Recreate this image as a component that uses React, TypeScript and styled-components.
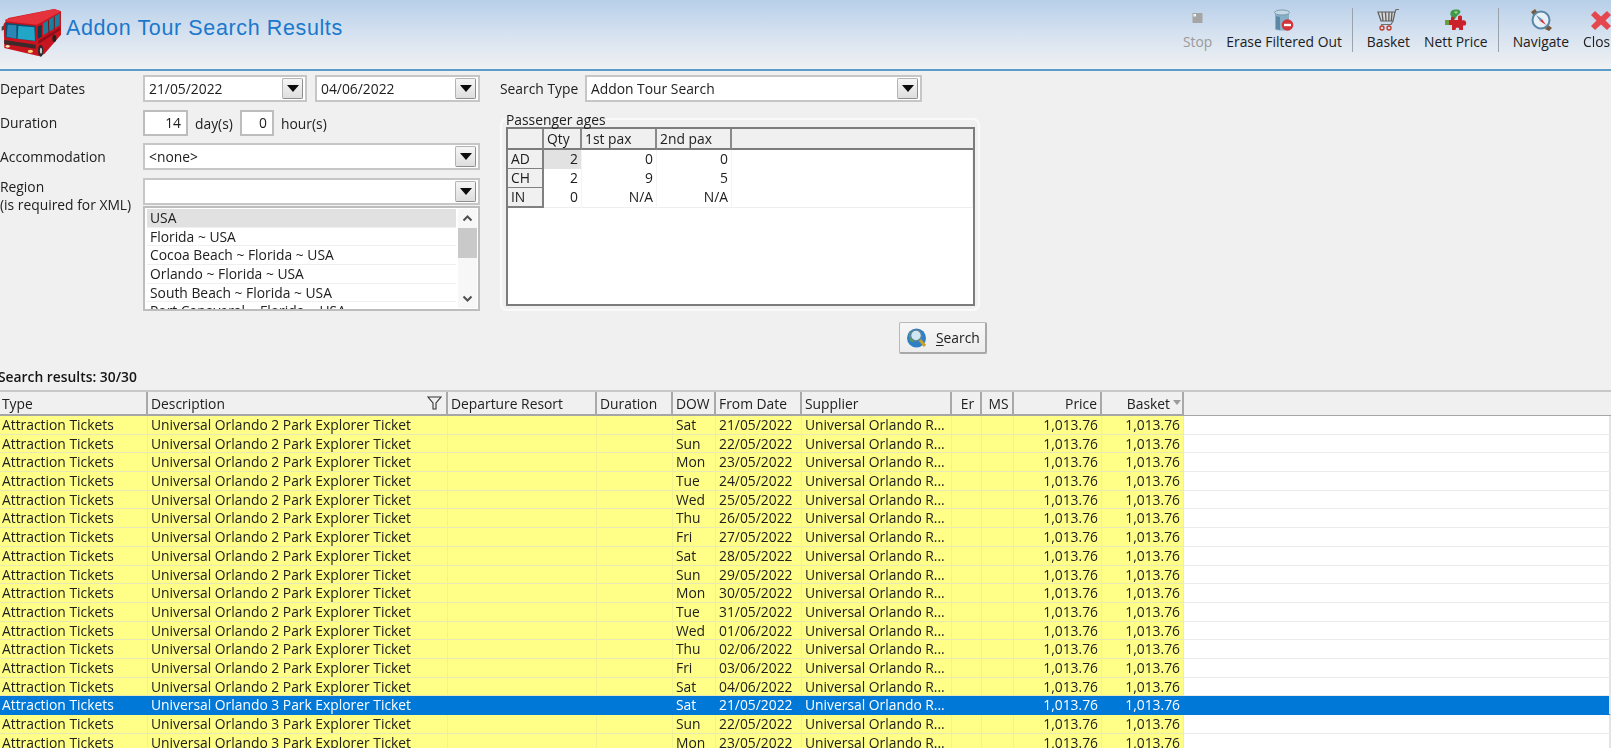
import React from "react";
import styled, { createGlobalStyle } from "styled-components";

const Global = createGlobalStyle`
  html, body { margin: 0; padding: 0; height: 100%; overflow: hidden; background: #f0f0f0; }
  body { font-family: "Open Sans", "Noto Sans", sans-serif; font-size: 13.85px; color: #202020; }
  #root { width: 1611px; height: 748px; overflow: hidden; }
`;

const Page = styled.div`
  width: 1611px;
  height: 748px;
  overflow: hidden;
  display: flex;
  flex-direction: column;
  filter: blur(0.3px);
`;

const Header = styled.header`
  height: 69px;
  flex: none;
  display: flex;
  align-items: flex-start;
  justify-content: space-between;
  background: linear-gradient(#b7cfe9 0%, #d6e2f0 50%, #f0f1f3 100%);
  border-bottom: 2px solid #5b9dc9;
`;

const Brand = styled.div`
  display: flex;
  align-items: center;
  padding: 4px 0 0 1px;
  gap: 5px;
`;

const Title = styled.h1`
  margin: 0 0 7px;
  font: 400 21.5px "Liberation Sans", Arial, sans-serif;
  letter-spacing: 0.62px;
  color: #1b78cc;
`;

const Toolbar = styled.div`
  display: flex;
  align-items: flex-start;
  flex: none;
  margin-right: -14px;
  padding-top: 8px;
`;

const Tool = styled.div<{ $disabled?: boolean }>`
  display: flex;
  flex-direction: column;
  align-items: center;
  padding: 0 7px;
  height: 44px;
  color: ${(p) => (p.$disabled ? "#9a9a9a" : "#202020")};
  white-space: nowrap;
`;

const ToolIcon = styled.svg`
  width: 24px;
  height: 24px;
  flex: none;
`;

const ToolSep = styled.div`
  width: 1px;
  height: 44px;
  margin: 0 7px 0 3px;
  background: #9aa3ab;
`;

const Form = styled.section`
  box-sizing: border-box;
  height: 297px;
  flex: none;
  display: flex;
  gap: 20px;
  padding-top: 4px;
`;

const LeftCol = styled.div`
  width: 480px;
  display: flex;
  flex-direction: column;
`;

const FieldRow = styled.div<{ $mb: number }>`
  display: flex;
  align-items: center;
  margin-bottom: ${(p) => p.$mb}px;
`;

const Label = styled.div`
  width: 143px;
  flex: none;
  line-height: 18px;
`;

const RegionLabel = styled(Label)`
  align-self: flex-start;
`;

const Combo = styled.div<{ $w?: number }>`
  box-sizing: border-box;
  height: 27px;
  width: ${(p) => (p.$w ? `${p.$w}px` : "auto")};
  flex: ${(p) => (p.$w ? "none" : "1")};
  background: #fff;
  border: 2px solid #c6c6c6;
  display: flex;
  align-items: center;
  padding: 0 2px 0 4px;
  justify-content: space-between;
`;

const RegionCombo = styled(Combo)`
  flex: none;
`;

const DateGap = styled.div`
  width: 8px;
  flex: none;
`;

const ArrowBtn = styled.div`
  box-sizing: border-box;
  width: 21px;
  height: 21px;
  border: 1px solid #b4b4b4;
  border-right-color: #8e8e8e;
  border-bottom-color: #8e8e8e;
  border-radius: 2px;
  background: linear-gradient(#f6f6f6, #dedede);
  display: flex;
  align-items: center;
  justify-content: center;
  &::before {
    content: "";
    border-left: 6px solid transparent;
    border-right: 6px solid transparent;
    border-top: 7px solid #0c0c0c;
  }
`;

const Spin = styled.div<{ $w: number }>`
  box-sizing: border-box;
  width: ${(p) => p.$w}px;
  height: 26px;
  background: #fff;
  border: 2px solid #bdbdbd;
  text-align: right;
  padding-right: 5px;
  line-height: 22px;
`;

const Unit = styled.span<{ $w: number }>`
  width: ${(p) => p.$w}px;
  padding-left: 7px;
  box-sizing: border-box;
`;

const RegionBlock = styled.div`
  flex: 1;
  display: flex;
  flex-direction: column;
`;

const ListBox = styled.div`
  box-sizing: border-box;
  height: 105px;
  margin-top: 1px;
  background: #fff;
  border: 2px solid #bdbdbd;
  display: flex;
  overflow: hidden;
`;

const ListItems = styled.div`
  flex: 1;
  padding: 1px 0 0 2px;
  overflow: hidden;
`;

const ListItem = styled.div<{ $sel?: boolean }>`
  box-sizing: border-box;
  height: 18.7px;
  line-height: 18px;
  padding-left: 3px;
  white-space: nowrap;
  background: ${(p) => (p.$sel ? "#e1e1e1" : "#fff")};
  border-bottom: 1px solid #efefef;
`;

const Scrollbar = styled.div`
  width: 19px;
  margin: 1px 1px 1px 2px;
  flex: none;
  display: flex;
  flex-direction: column;
  align-items: center;
  background: #f7f7f7;
`;

const Chevron = styled.svg`
  width: 19px;
  height: 19px;
  flex: none;
`;

const Thumb = styled.div`
  width: 19px;
  height: 30px;
  background: #c9c9c9;
`;

const ScrollGap = styled.div`
  flex: 1;
`;

const RightCol = styled.div`
  width: 487px;
  display: flex;
  flex-direction: column;
`;

const TypeRow = styled.div`
  display: flex;
  align-items: center;
  height: 27px;
`;

const TypeLabel = styled.div`
  width: 85px;
  flex: none;
  white-space: nowrap;
`;

const PaxGroup = styled.fieldset`
  box-sizing: border-box;
  width: 480px;
  height: 199px;
  margin: 10px 0 0;
  padding: 0 3px 5px 4px;
  border: 2px solid #fafafa;
  border-radius: 7px;
  min-width: 0;
`;

const PaxLegend = styled.legend`
  padding: 0;
  margin-left: 0;
  line-height: 14px;
  height: 14px;
  position: relative;
  top: 1px;
`;

const PaxGrid = styled.div`
  box-sizing: border-box;
  height: 179px;
  margin-top: 1px;
  background: #fff;
  border: 2px solid #7c7c7c;
  overflow: hidden;
`;

const PaxRow = styled.div<{ $head?: boolean }>`
  display: grid;
  grid-template-columns: 36px 38px 75px 75px 1fr;
  height: ${(p) => (p.$head ? "21px" : "19px")};
  line-height: ${(p) => (p.$head ? "19px" : "18px")};
`;

const PaxHead = styled.div`
  box-sizing: border-box;
  background: #f0f0f0;
  padding-left: 3px;
  border-right: 2px solid #8a8a8a;
  border-bottom: 2px solid #7c7c7c;
  &:last-child { border-right: none; }
`;

const PaxRowHead = styled.div`
  box-sizing: border-box;
  background: #f0f0f0;
  padding-left: 3px;
  border-right: 2px solid #808080;
  border-bottom: 2px solid #808080;
`;

const PaxCell = styled.div<{ $sel?: boolean }>`
  box-sizing: border-box;
  text-align: right;
  padding-right: 3px;
  background: ${(p) => (p.$sel ? "#e2e2e2" : "#fff")};
  border-bottom: 1px solid #eeeeee;
  border-right: 1px solid #f4f4f4;
`;

const SearchBar = styled.div`
  display: flex;
  justify-content: flex-end;
  margin-top: 11px;
`;

const SearchBtn = styled.button`
  box-sizing: border-box;
  width: 88px;
  height: 32px;
  padding: 0 0 0 6px;
  display: flex;
  align-items: center;
  gap: 8px;
  background: linear-gradient(#f7f7f7, #ececec);
  border: 1px solid #b9b9b9;
  border-right: 2px solid #a8a8a8;
  border-bottom: 2px solid #a8a8a8;
  border-radius: 2px;
  font: inherit;
  color: #202020;
  u { text-underline-offset: 2px; }
`;

const ResultsTitle = styled.div`
  flex: none;
  height: 22px;
  margin-left: -2px;
  font-weight: 600;
  line-height: 18px;
  color: #151515;
`;

const Results = styled.section`
  flex: 1;
  border-top: 2px solid #c8c8c8;
  overflow: hidden;
  background: #fff;
`;

const columns = "148px 300px 149px 76px 43px 86px 150px 30px 32px 88px 82px 1fr";

const HeadRow = styled.div`
  display: grid;
  grid-template-columns: ${columns};
  height: 24px;
  box-sizing: border-box;
  background: #f0f0f0;
  border-bottom: 2px solid #a6a6a6;
`;

const HeadCell = styled.div<{ $right?: number; $center?: boolean }>`
  box-sizing: border-box;
  position: relative;
  line-height: 23px;
  padding: 0 ${(p) => p.$right ?? 0}px 0 ${(p) => (p.$right ? 0 : 3)}px;
  text-align: ${(p) => (p.$right ? "right" : p.$center ? "center" : "left")};
  border-right: 2px solid #a9a9a9;
  white-space: nowrap;
  &:first-child { padding-left: 2px; }
`;

const HeadFill = styled.div`
  background: #f0f0f0;
`;

const FilterMark = styled.svg`
  position: absolute;
  right: 4px;
  top: 4px;
  width: 15px;
  height: 14px;
`;

const SortMark = styled.span`
  position: absolute;
  right: 1px;
  top: 8px;
  border-left: 4px solid transparent;
  border-right: 4px solid transparent;
  border-top: 5px solid #9a9a9a;
`;

const Row = styled.div`
  display: grid;
  grid-template-columns: ${columns};
  height: 18.7px;
`;

const Cell = styled.div<{ $sel: boolean; $right?: boolean }>`
  box-sizing: border-box;
  line-height: 18px;
  padding: ${(p) => (p.$right ? "0 3px 0 0" : "0 0 0 3px")};
  text-align: ${(p) => (p.$right ? "right" : "left")};
  white-space: nowrap;
  overflow: hidden;
  background: ${(p) => (p.$sel ? "#0078d7" : "#ffff88")};
  color: ${(p) => (p.$sel ? "#fff" : "#202020")};
  border-bottom: 1px solid ${(p) => (p.$sel ? "#0078d7" : "#e9e9b8")};
  border-right: 1px solid ${(p) => (p.$sel ? "#0078d7" : "#f2f28e")};
  &:first-child { padding-left: 2px; }
`;

const RowFill = styled.div<{ $sel: boolean }>`
  background: ${(p) => (p.$sel ? "#0078d7" : "#fff")};
  border-bottom: 1px solid ${(p) => (p.$sel ? "#0078d7" : "#ececec")};
  border-right: 2px solid #e4e4e4;
`;

const Bus = () => (
  <svg width="60" height="55" viewBox="0 0 180 165">
    <path d="M12 62 L2 68 L2 80 L12 76Z" fill="#444" />
    <path d="M8 60 L22 42 L160 15 L180 22 L180 92 L130 150 L112 156 L10 132Z" fill="#c8141f" />
    <path d="M14 46 L160 15 L180 22 L108 62 L12 52Z" fill="#e5323c" />
    <path d="M14 56 L104 66 L104 112 L14 100Z" fill="#0f4f6e" />
    <path d="M20 62 L46 64 L46 104 L17 98Z" fill="#2a86b4" />
    <path d="M52 66 L100 70 L102 110 L50 104Z" fill="#22a6c8" />
    <path d="M110 68 L122 62 L122 98 L110 104Z" fill="#10394a" />
    <path d="M126 58 L176 28 L176 64 L126 94Z" fill="#1a7f9c" />
    <path d="M142 48 L144 88M160 38 L160 76" stroke="#7e0f16" strokeWidth="3" />
    <path d="M10 108 L104 122 L104 134 L10 120Z" fill="#3a2a2c" />
    <path d="M112 110 L178 70 L178 78 L112 120Z" fill="#8f0e18" />
    <ellipse cx="20" cy="127" rx="6" ry="4" fill="#f6e9b0" />
    <ellipse cx="88" cy="142" rx="8" ry="5" fill="#f7d878" />
    <ellipse cx="119" cy="140" rx="8" ry="18" fill="#2a2a2a" />
    <ellipse cx="120" cy="140" rx="3.5" ry="9" fill="#c9c9c9" />
    <ellipse cx="160" cy="103" rx="6" ry="11" fill="#222" />
  </svg>
);

const StopIcon = () => (
  <ToolIcon viewBox="0 0 24 24">
    <rect x="6.5" y="5" width="10" height="10" fill="#a5a5a5" />
    <rect x="7.5" y="6" width="2.5" height="2.5" fill="#f4f4f4" />
  </ToolIcon>
);

const BinIcon = () => (
  <ToolIcon viewBox="0 0 24 24">
    <path d="M3 4 V21 C3 23 17 23 17 21 V4Z" fill="#86aec6" />
    <path d="M4 8 L4 21 L8 22 L8 9Z" fill="#5d88a5" />
    <ellipse cx="10" cy="4.5" rx="7.5" ry="2.5" fill="#c3d9e6" stroke="#7e9cb0" strokeWidth="1" />
    <circle cx="15.5" cy="17" r="5.8" fill="#d3333a" />
    <rect x="12" y="15.8" width="7" height="2.4" fill="#fff" />
  </ToolIcon>
);

const CartIcon = () => (
  <ToolIcon viewBox="0 0 24 24">
    <path d="M2 4 H19 L17 13 H5Z" fill="#d8d8d8" stroke="#5e5e5e" strokeWidth="1.2" />
    <path d="M6 4 L7 13M9.5 4 L10 13M13 4 L12.8 13M16 4 L15.3 13" stroke="#5e5e5e" strokeWidth="1.3" />
    <path d="M19 4 L20 1.5 H23M17 13 L15 16.5 H5" fill="none" stroke="#6e6e6e" strokeWidth="1.2" />
    <circle cx="6" cy="20" r="2" fill="none" stroke="#c0392b" strokeWidth="1.3" />
    <circle cx="13" cy="20" r="2" fill="none" stroke="#c0392b" strokeWidth="1.3" />
  </ToolIcon>
);

const PuzzleIcon = () => (
  <ToolIcon viewBox="0 0 24 24">
    <path d="M7 8 C5 4 8 1 12 1.5 C16 1 18 4 15 6 C13 8 12 9 11 11 C9 12 8 10 7 8Z" fill="#3f9a48" />
    <path d="M10 4 C11 3 13 3 14 4 L12 6Z" fill="#9ccf8e" />
    <path d="M1 12 H7 V9.5 C8 8 11 9 10.5 11 L10 12 H14 V8.5 C15 7 18 7 18 9 V12.5 C20 11.5 23 13 22 16 C22 18 20 17.5 19 17.5 V22 H15 C16 20 14 18.5 12 20 L11.5 22 H8 V17 H1Z" fill="#c9202a" />
    <path d="M1 12 H5 V17 H1Z" fill="#6d9c3f" />
  </ToolIcon>
);

const CompassIcon = () => (
  <ToolIcon viewBox="0 0 24 24">
    <path d="M2 4 L6 1 L9 5 L5 8Z" fill="#7a5a3c" />
    <path d="M19 17 L23 20 L20 23 L16 21Z" fill="#7a5a3c" />
    <circle cx="12" cy="12" r="8.5" fill="#e6f0f6" stroke="#5a87a6" strokeWidth="2" />
    <path d="M7 7 L13 11 L11 13Z" fill="#5f93b8" />
    <path d="M11 13 L13 11 L17 17Z" fill="#d7363d" />
  </ToolIcon>
);

const CloseIcon = () => (
  <ToolIcon viewBox="0 0 24 24">
    <path d="M6 3 L12 8.5 L18 3 L22 7 L16.5 12.5 L22 18 L18 22 L12 16.5 L6 22 L2 18 L7.5 12.5 L2 7Z" fill="#e4474d" />
  </ToolIcon>
);

const GlobeIcon = () => (
  <svg width="22" height="22" viewBox="0 0 22 22">
    <circle cx="10.5" cy="11" r="9.5" fill="#2f7fc6" />
    <path d="M3 6 C7 3 10 5 10 8 C7 9 6 12 8 15 C5 16 2 12 3 6Z" fill="#4fa34f" />
    <circle cx="10" cy="8.5" r="5.5" fill="#cfe7f2" stroke="#5f8096" strokeWidth="1.5" />
    <path d="M14 13 L19 19" stroke="#c9a126" strokeWidth="3" />
  </svg>
);

const Up = () => (
  <Chevron viewBox="0 0 19 19">
    <path d="M5.5 11.5 L9.5 7.5 L13.5 11.5" fill="none" stroke="#505050" strokeWidth="2" />
  </Chevron>
);

const Down = () => (
  <Chevron viewBox="0 0 19 19">
    <path d="M5.5 7.5 L9.5 11.5 L13.5 7.5" fill="none" stroke="#505050" strokeWidth="2" />
  </Chevron>
);

const regions = [
  "USA",
  "Florida ~ USA",
  "Cocoa Beach ~ Florida ~ USA",
  "Orlando ~ Florida ~ USA",
  "South Beach ~ Florida ~ USA",
  "Port Canaveral ~ Florida ~ USA",
];

const pax = [
  ["AD", "2", "0", "0"],
  ["CH", "2", "9", "5"],
  ["IN", "0", "N/A", "N/A"],
];

const dates: [string, string][] = [
  ["Sat", "21/05/2022"],
  ["Sun", "22/05/2022"],
  ["Mon", "23/05/2022"],
  ["Tue", "24/05/2022"],
  ["Wed", "25/05/2022"],
  ["Thu", "26/05/2022"],
  ["Fri", "27/05/2022"],
  ["Sat", "28/05/2022"],
  ["Sun", "29/05/2022"],
  ["Mon", "30/05/2022"],
  ["Tue", "31/05/2022"],
  ["Wed", "01/06/2022"],
  ["Thu", "02/06/2022"],
  ["Fri", "03/06/2022"],
  ["Sat", "04/06/2022"],
];

const rows = [2, 3]
  .flatMap((park) => dates.map(([dow, date]) => ({ park, dow, date })))
  .slice(0, 18);

export default function App() {
  return (
    <Page>
      <Global />
      <Header>
        <Brand>
          <Bus />
          <Title>Addon Tour Search Results</Title>
        </Brand>
        <Toolbar>
          <Tool $disabled><StopIcon />Stop</Tool>
          <Tool><BinIcon />Erase Filtered Out</Tool>
          <ToolSep />
          <Tool><CartIcon />Basket</Tool>
          <Tool><PuzzleIcon />Nett Price</Tool>
          <ToolSep />
          <Tool><CompassIcon />Navigate</Tool>
          <Tool><CloseIcon />Close</Tool>
        </Toolbar>
      </Header>
      <Form>
        <LeftCol>
          <FieldRow $mb={8}>
            <Label>Depart Dates</Label>
            <Combo $w={164}>21/05/2022<ArrowBtn /></Combo>
            <DateGap />
            <Combo $w={165}>04/06/2022<ArrowBtn /></Combo>
          </FieldRow>
          <FieldRow $mb={7}>
            <Label>Duration</Label>
            <Spin $w={45}>14</Spin>
            <Unit $w={52}>day(s)</Unit>
            <Spin $w={34}>0</Spin>
            <Unit $w={70}>hour(s)</Unit>
          </FieldRow>
          <FieldRow $mb={8}>
            <Label>Accommodation</Label>
            <Combo>&lt;none&gt;<ArrowBtn /></Combo>
          </FieldRow>
          <FieldRow $mb={0}>
            <RegionLabel>Region<br />(is required for XML)</RegionLabel>
            <RegionBlock>
              <RegionCombo><span /><ArrowBtn /></RegionCombo>
              <ListBox>
                <ListItems>
                  {regions.map((r, i) => (
                    <ListItem key={r} $sel={i === 0}>{r}</ListItem>
                  ))}
                </ListItems>
                <Scrollbar>
                  <Up />
                  <Thumb />
                  <ScrollGap />
                  <Down />
                </Scrollbar>
              </ListBox>
            </RegionBlock>
          </FieldRow>
        </LeftCol>
        <RightCol>
          <TypeRow>
            <TypeLabel>Search Type</TypeLabel>
            <Combo $w={337}>Addon Tour Search<ArrowBtn /></Combo>
          </TypeRow>
          <PaxGroup>
            <PaxLegend>Passenger ages</PaxLegend>
            <PaxGrid>
              <PaxRow $head>
                <PaxHead />
                <PaxHead>Qty</PaxHead>
                <PaxHead>1st pax</PaxHead>
                <PaxHead>2nd pax</PaxHead>
                <PaxHead />
              </PaxRow>
              {pax.map((row, i) => (
                <PaxRow key={row[0]}>
                  <PaxRowHead>{row[0]}</PaxRowHead>
                  <PaxCell $sel={i === 0}>{row[1]}</PaxCell>
                  <PaxCell>{row[2]}</PaxCell>
                  <PaxCell>{row[3]}</PaxCell>
                  <PaxCell />
                </PaxRow>
              ))}
            </PaxGrid>
          </PaxGroup>
          <SearchBar>
            <SearchBtn>
              <GlobeIcon />
              <span><u>S</u>earch</span>
            </SearchBtn>
          </SearchBar>
        </RightCol>
      </Form>
      <ResultsTitle>Search results: 30/30</ResultsTitle>
      <Results>
        <HeadRow>
          <HeadCell>Type</HeadCell>
          <HeadCell>Description
            <FilterMark viewBox="0 0 15 14">
              <path d="M1 1 H14 L9 7 V13 H6 V7Z" fill="none" stroke="#333" strokeWidth="1.1" />
            </FilterMark>
          </HeadCell>
          <HeadCell>Departure Resort</HeadCell>
          <HeadCell>Duration</HeadCell>
          <HeadCell>DOW</HeadCell>
          <HeadCell>From Date</HeadCell>
          <HeadCell>Supplier</HeadCell>
          <HeadCell $center>Er</HeadCell>
          <HeadCell $center>MS</HeadCell>
          <HeadCell $right={3}>Price</HeadCell>
          <HeadCell $right={12}>Basket<SortMark /></HeadCell>
          <HeadFill />
        </HeadRow>
        {rows.map((r, i) => {
          const sel = i === 15;
          return (
            <Row key={i}>
              <Cell $sel={sel}>Attraction Tickets</Cell>
              <Cell $sel={sel}>{`Universal Orlando ${r.park} Park Explorer Ticket`}</Cell>
              <Cell $sel={sel} />
              <Cell $sel={sel} />
              <Cell $sel={sel}>{r.dow}</Cell>
              <Cell $sel={sel}>{r.date}</Cell>
              <Cell $sel={sel}>Universal Orlando R...</Cell>
              <Cell $sel={sel} />
              <Cell $sel={sel} />
              <Cell $sel={sel} $right>1,013.76</Cell>
              <Cell $sel={sel} $right>1,013.76</Cell>
              <RowFill $sel={sel} />
            </Row>
          );
        })}
      </Results>
    </Page>
  );
}
